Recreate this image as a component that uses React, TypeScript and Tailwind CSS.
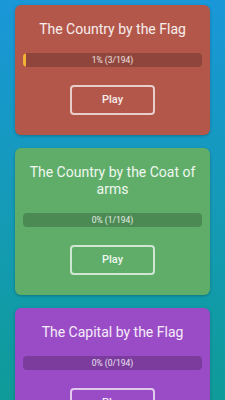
import React from "react";

type Card = {
  title: string;
  progress: string;
  pct: number;
  bg: string;
};

const cards: Card[] = [
  { title: "The Country by the Flag", progress: "1% (3/194)", pct: 1.5, bg: "bg-[#b3574a]" },
  { title: "The Country by the Coat of arms", progress: "0% (1/194)", pct: 0, bg: "bg-[#5fad69]" },
  { title: "The Capital by the Flag", progress: "0% (0/194)", pct: 0, bg: "bg-[#9a4bc6]" },
];

export default function App() {
  return (
    <div
      className="w-[225px] h-[400px] overflow-hidden bg-gradient-to-b from-[#1a97d8] via-[#159ab8] to-[#0f9b98] flex flex-col gap-[13px] pt-[5px] px-[15px]"
      style={{ fontFamily: "Roboto, 'Noto Sans', sans-serif" }}
    >
      {cards.map((c) => (
        <div
          key={c.title}
          className={`${c.bg} shrink-0 w-[195px] rounded-[6px] shadow-[0_1px_3px_rgba(0,0,0,0.25)] flex flex-col items-center pt-[16px] pb-[20px] px-[8px]`}
        >
          <div className="text-[14px] leading-[17px] text-white/90 text-center px-[4px]">{c.title}</div>
          <div className="relative mt-[15px] w-full h-[14px] rounded-[4px] bg-black/20 flex items-center justify-center overflow-hidden">
            {c.pct > 0 && (
              <div
                className="absolute left-0 top-0 h-full rounded-[3px] bg-[#f2b233]"
                style={{ width: `${c.pct}%`, minWidth: "3px" }}
              />
            )}
            <span className="relative text-[8.5px] leading-none text-white/85">{c.progress}</span>
          </div>
          <button className="mt-[18px] w-[85px] h-[30px] rounded-[4px] border-2 border-white/70 text-[11px] font-medium text-white/90 flex items-center justify-center">
            Play
          </button>
        </div>
      ))}
    </div>
  );
}
